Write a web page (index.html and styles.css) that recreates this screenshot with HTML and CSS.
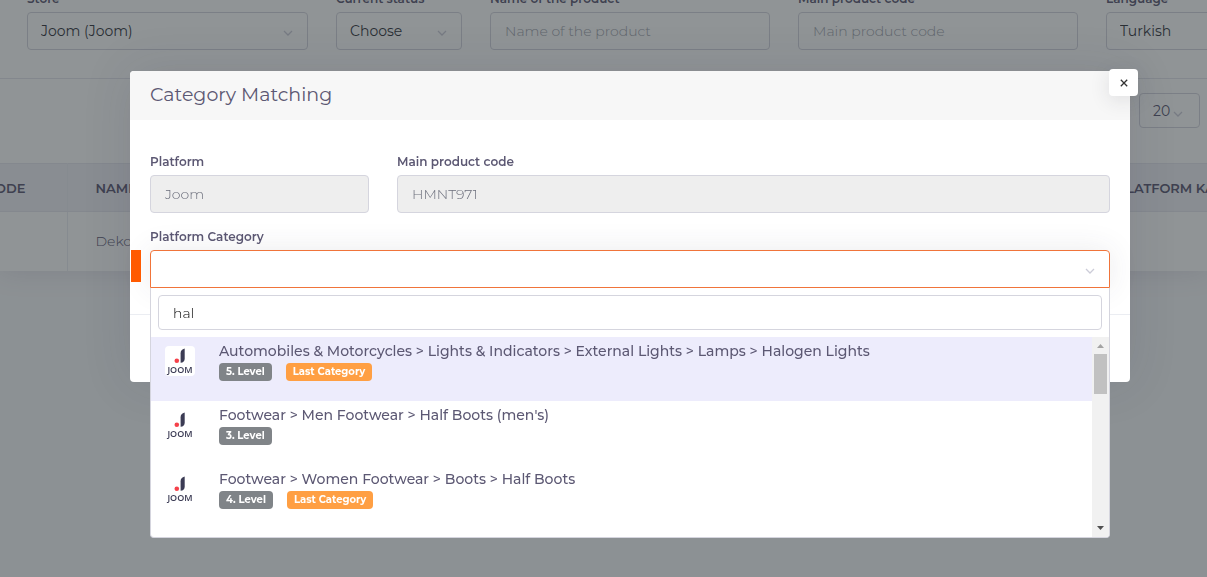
FILE: index.html
```html
<!DOCTYPE html>
<html lang="en">
<head>
<meta charset="utf-8">
<title>Category Matching</title>
<link rel="stylesheet" href="styles.css">
</head>
<body>
<svg class="defs" aria-hidden="true">
  <symbol id="chevron" viewBox="0 0 10 6"><path d="M1 1l4 4 4-4" fill="none" stroke="currentColor" stroke-width="1.3"/></symbol>
  <symbol id="joom" viewBox="0 0 30 30">
    <path d="M15.6 16.8V7.2Q15.6 3.6 19.7 2.6V12.4Q19.7 16.2 15.6 16.8Z" fill="#3b3b54"/>
    <circle cx="11.8" cy="14.8" r="2.3" fill="#f5414a"/>
    <text x="15" y="27" text-anchor="middle" font-family="Open Sans, sans-serif" font-size="9" font-weight="600" fill="#3b3b54">JOOM</text>
  </symbol>
</svg>

<main class="page">
  <section class="card">
    <form class="filters">
      <div class="field">
        <label for="store">Store</label>
        <div class="select"><select id="store" class="control"><option>Joom (Joom)</option></select><svg><use href="#chevron"/></svg></div>
      </div>
      <div class="field">
        <label for="status">Current status</label>
        <div class="select"><select id="status" class="control"><option>Choose</option></select><svg><use href="#chevron"/></svg></div>
      </div>
      <div class="field">
        <label for="name">Name of the product</label>
        <input id="name" class="control" placeholder="Name of the product">
      </div>
      <div class="field">
        <label for="code">Main product code</label>
        <input id="code" class="control" placeholder="Main product code">
      </div>
      <div class="field">
        <label for="language">Language</label>
        <div class="select"><select id="language" class="control"><option>Turkish</option></select><svg><use href="#chevron"/></svg></div>
      </div>
    </form>
    <div class="toolbar">
      <div class="select page-size"><select class="control" aria-label="Rows per page"><option>20</option></select><svg><use href="#chevron"/></svg></div>
    </div>
    <table class="products">
      <thead><tr><th class="col-code">Code</th><th>Name</th><th class="col-platform">Platform Kategori</th></tr></thead>
      <tbody><tr><td></td><td>Dekor</td><td></td></tr></tbody>
    </table>
  </section>
</main>

<div class="overlay">
  <div class="modal" role="dialog" aria-labelledby="title">
    <header class="modal-header"><h1 id="title">Category Matching</h1></header>
    <button class="close" type="button" aria-label="Close"><svg viewBox="0 0 8 8"><path d="M.8.8l6.4 6.4M7.2.8L.8 7.2" stroke="#333" stroke-width="1.3"/></svg></button>
    <div class="modal-body">
      <div class="row">
        <div class="field">
          <label for="platform">Platform</label>
          <input id="platform" class="control" value="Joom" disabled>
        </div>
        <div class="field">
          <label for="product-code">Main product code</label>
          <input id="product-code" class="control" value="HMNT971" disabled>
        </div>
      </div>
      <div class="field category">
        <label for="category">Platform Category</label>
        <div class="select open">
          <select id="category" class="control"><option></option></select><svg><use href="#chevron"/></svg>
          <span class="marker"></span>
          <div class="dropdown">
            <div class="search"><input class="control" value="hal" aria-label="Search categories"></div>
            <div class="results">
              <ul>
                <li class="active">
                  <svg class="logo" role="img" aria-label="Joom"><use href="#joom"/></svg>
                  <div class="result">
                    <span class="path">Automobiles &amp; Motorcycles &gt; Lights &amp; Indicators &gt; External Lights &gt; Lamps &gt; Halogen Lights</span>
                    <div class="badges"><span class="badge">5. Level</span><span class="badge last">Last Category</span></div>
                  </div>
                </li>
                <li>
                  <svg class="logo" role="img" aria-label="Joom"><use href="#joom"/></svg>
                  <div class="result">
                    <span class="path">Footwear &gt; Men Footwear &gt; Half Boots (men's)</span>
                    <div class="badges"><span class="badge">3. Level</span></div>
                  </div>
                </li>
                <li>
                  <svg class="logo" role="img" aria-label="Joom"><use href="#joom"/></svg>
                  <div class="result">
                    <span class="path">Footwear &gt; Women Footwear &gt; Boots &gt; Half Boots</span>
                    <div class="badges"><span class="badge">4. Level</span><span class="badge last">Last Category</span></div>
                  </div>
                </li>
              </ul>
              <div class="scrollbar" aria-hidden="true">
                <svg class="arrow" viewBox="0 0 7 4"><path d="M0 4l3.5-4L7 4z" fill="#a3a3a3"/></svg>
                <span class="thumb"></span>
                <svg class="arrow down" viewBox="0 0 7 4"><path d="M0 0h7L3.5 4z" fill="#505050"/></svg>
              </div>
            </div>
          </div>
        </div>
      </div>
    </div>
    <footer class="modal-footer"></footer>
  </div>
</div>
</body>
</html>
```

FILE: styles.css
```css
* { box-sizing: border-box; }

html, body { height: 100%; }

body {
  margin: 0;
  overflow: hidden;
  background: #f7f8fa;
  color: #595d6e;
  font: 300 14px/20px Montserrat, Inter, sans-serif;
}

.defs { position: absolute; width: 0; height: 0; }

.page { overflow: hidden; padding-bottom: 60px; }

.card {
  margin-top: -9px;
  background: #fff;
  box-shadow: 0 0 26px rgba(82, 63, 105, .15);
}

.filters {
  display: grid;
  grid-template-columns: 281fr 126fr 280fr 280fr 126fr;
  gap: 28px;
  margin-right: -25px;
  padding: 0 0 28px 27px;
}

.field label {
  display: block;
  margin-bottom: 5px;
  font-size: 12px;
  line-height: 16px;
  font-weight: 600;
  color: #5c5873;
  white-space: nowrap;
}

.control {
  display: block;
  width: 100%;
  height: 38px;
  margin: 0;
  padding: 0 14px;
  appearance: none;
  border: 1px solid #d5d5de;
  border-radius: 4px;
  outline: 0;
  background: #fff;
  color: #33353d;
  font: inherit;
}

select.control { padding: 0 13px; font-weight: 400; }
.control::placeholder { color: #a0a3ad; opacity: 1; }

.control:disabled {
  background: #eee;
  color: #6c6f7c;
  opacity: 1;
}

.select { position: relative; }

.select > svg {
  position: absolute;
  top: 18px;
  right: 15px;
  width: 10px;
  height: 6px;
  color: #ccccd8;
  pointer-events: none;
}

.toolbar {
  display: flex;
  justify-content: flex-end;
  padding: 14px 7px 35px;
  border-top: 1px solid #e4e5ec;
}

.page-size { width: 61px; }
.page-size .control { height: 35px; color: #5c5873; }
.page-size > svg { right: 17px; }

.products {
  width: calc(100% + 200px);
  margin-left: -100px;
  table-layout: fixed;
  border-collapse: collapse;
  text-align: left;
}

.products th, .products td {
  padding: 0 28px;
  border-right: 1px solid #ebedf2;
  white-space: nowrap;
}

.products th {
  height: 48px;
  border-top: 1px solid #e6e7ee;
  border-bottom: 1px solid #e6e7ee;
  background: #f1f1f6;
  color: #5c5873;
  font-size: 13px;
  font-weight: 600;
  text-transform: uppercase;
}

.products td { height: 59px; color: #5c5873; }
.products .col-code { width: 167px; padding-right: 41px; text-align: right; }
.products .col-platform { width: 218px; }

.overlay {
  position: fixed;
  inset: 0;
  padding: 71px 77px 0 130px;
  background: rgba(33, 41, 45, .5);
}

.modal {
  position: relative;
  border-radius: 4px;
  background: #fff;
  box-shadow: 0 0 50px rgba(45, 40, 70, .12);
}

.modal-header {
  padding: 12px 20px 13px;
  border-radius: 4px 4px 0 0;
  background: #f7f7f7;
}

.modal-header h1 {
  margin: 0;
  color: #5c5873;
  font-size: 19px;
  line-height: 24px;
  font-weight: 400;
}

.close {
  position: absolute;
  top: -2px;
  right: -8px;
  display: grid;
  place-items: center;
  width: 29px;
  height: 27px;
  padding: 0;
  border: 0;
  border-radius: 4px;
  background: #fff;
  box-shadow: 0 4px 20px rgba(40, 40, 60, .12);
}

.close svg { width: 8px; height: 8px; }

.modal-body {
  display: grid;
  gap: 16px;
  padding: 34px 20px 26px;
}

.row {
  display: grid;
  grid-template-columns: 219fr 713fr;
  gap: 28px;
}

.modal-footer { height: 68px; border-top: 1px solid #ebedf2; }

.open > .control {
  border-color: #f0743a;
  border-radius: 4px 4px 0 0;
  box-shadow: 0 0 30px rgba(60, 60, 80, .1);
}

.marker {
  position: absolute;
  top: 0;
  left: -19px;
  width: 10px;
  height: 32px;
  background: #ff5a00;
}

.dropdown {
  position: absolute;
  top: 100%;
  left: 0;
  right: 0;
  overflow: hidden;
  border: 1px solid #d5d5de;
  border-top: 0;
  border-radius: 0 0 4px 4px;
  background: #fff;
}

.search { padding: 7px; }
.search .control { height: 35px; color: #000; }

.results { display: flex; }

.results ul {
  flex: 1;
  margin: 0;
  padding: 0 0 8px;
  list-style: none;
}

.results li {
  display: flex;
  gap: 24px;
  height: 64px;
  padding: 4px 14px;
  color: #5c5873;
  font-weight: 500;
}

.results .active { background: #edecfc; }

.logo {
  width: 30px;
  height: 30px;
  margin-top: 5px;
  border-radius: 4px;
  background: #fff;
}

.path { display: block; white-space: nowrap; }

.badges {
  display: flex;
  gap: 14px;
  margin-top: 2px;
}

.badge {
  padding: 0 7px;
  border-radius: 4px;
  background: #808488;
  color: #fff;
  font-size: 10px;
  line-height: 18px;
  font-weight: 700;
}

.badge.last { background: #ff9f43; }

.scrollbar {
  display: flex;
  flex-direction: column;
  align-items: center;
  gap: 6px;
  width: 17px;
  padding: 7px 0;
  background: #f1f1f1;
}

.arrow { width: 7px; height: 4px; }
.thumb { width: 13px; height: 40px; background: #c1c1c1; }
.arrow.down { margin-top: auto; }
```
